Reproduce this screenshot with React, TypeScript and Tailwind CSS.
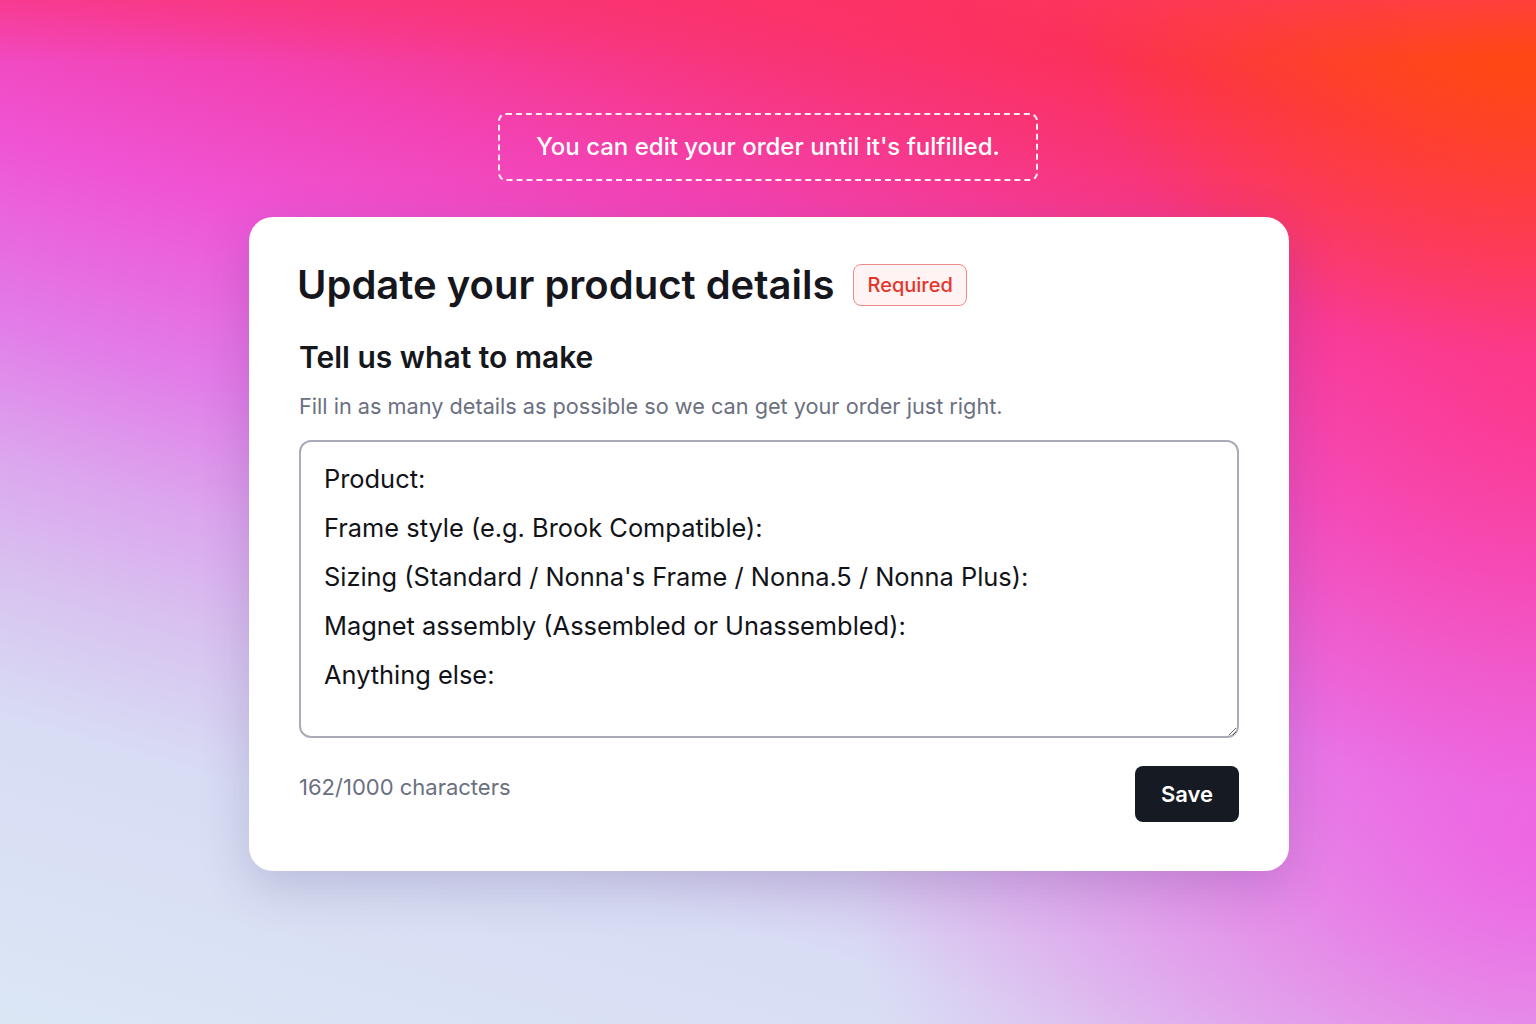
import React from "react";

const DETAILS = [
  "Product:",
  "Frame style (e.g. Brook Compatible):",
  "Sizing (Standard / Nonna's Frame / Nonna.5 / Nonna Plus):",
  "Magnet assembly (Assembled or Unassembled):",
  "Anything else:",
].join("\n");

export default function App() {
  return (
    <div className="flex h-[1024px] w-full flex-col items-center overflow-hidden bg-[linear-gradient(to_bottom,rgba(252,52,110,0.5)_0%,rgba(252,52,110,0)_6%),radial-gradient(ellipse_30%_35%_at_100%_0%,#ff4a08_0%,rgba(255,74,8,0)_100%),radial-gradient(ellipse_30%_40%_at_100%_38%,rgba(255,54,130,0.75)_0%,rgba(255,54,130,0)_100%),radial-gradient(ellipse_45%_55%_at_100%_82%,rgba(240,96,226,0.9)_0%,rgba(240,96,226,0.5)_40%,rgba(240,96,226,0)_100%),linear-gradient(196deg,#ff4528_0%,#fb3058_12%,#f8357c_20%,#f342b4_30%,#ef55d6_40%,#e27ce8_52%,#dca5ee_61%,#d8c4f0_70%,#d8dcf4_79%,#dbe6f5_100%)] font-['Inter',sans-serif]">
      {/* notice */}
      <div className="mt-[113px] flex h-[68px] w-[540px] items-center justify-center rounded-lg border-2 border-dashed border-white/90">
        <p className="text-[24px] font-medium text-white">
          You can edit your order until it's fulfilled.
        </p>
      </div>

      {/* card */}
      <div className="ml-[2px] mt-[36px] w-[1040px] rounded-3xl bg-white px-12 pb-[49px] pt-[45px] shadow-[0_16px_50px_rgba(60,50,110,0.2)]">
        <div className="flex items-center gap-[19px]">
          <h1 className="text-[40px] font-semibold leading-[46px] text-[#15171c]">
            Update your product details
          </h1>
          <span className="rounded-lg border border-[#f08a8a] bg-[#fff3f3] px-[13px] py-[7px] text-[20px] font-medium leading-[26px] text-[#e5342b]">
            Required
          </span>
        </div>

        <h2 className="mt-[31px] pl-[2px] text-[30px] font-semibold leading-[36px] text-[#15171c]">
          Tell us what to make
        </h2>
        <p className="mt-[17px] pl-[2px] text-[21.7px] leading-[28px] text-[#6b7080]">
          Fill in as many details as possible so we can get your order just right.
        </p>

        <textarea
          readOnly
          defaultValue={DETAILS}
          className="mt-[20px] ml-[2px] block h-[298px] w-[940px] resize-y rounded-xl border-2 border-[#a9abb8] bg-white px-[23px] py-[12px] text-[25.4px] leading-[49px] text-[#111318] outline-none"
        />

        <div className="mt-[28px] ml-[2px] flex w-[940px] items-center justify-between">
          <span className="-mt-[14px] text-[22px] text-[#6b7080]">162/1000 characters</span>
          <button className="flex h-[56px] w-[104px] items-center justify-center rounded-lg bg-[#161a22] text-[22px] font-semibold text-white">
            Save
          </button>
        </div>
      </div>
    </div>
  );
}
